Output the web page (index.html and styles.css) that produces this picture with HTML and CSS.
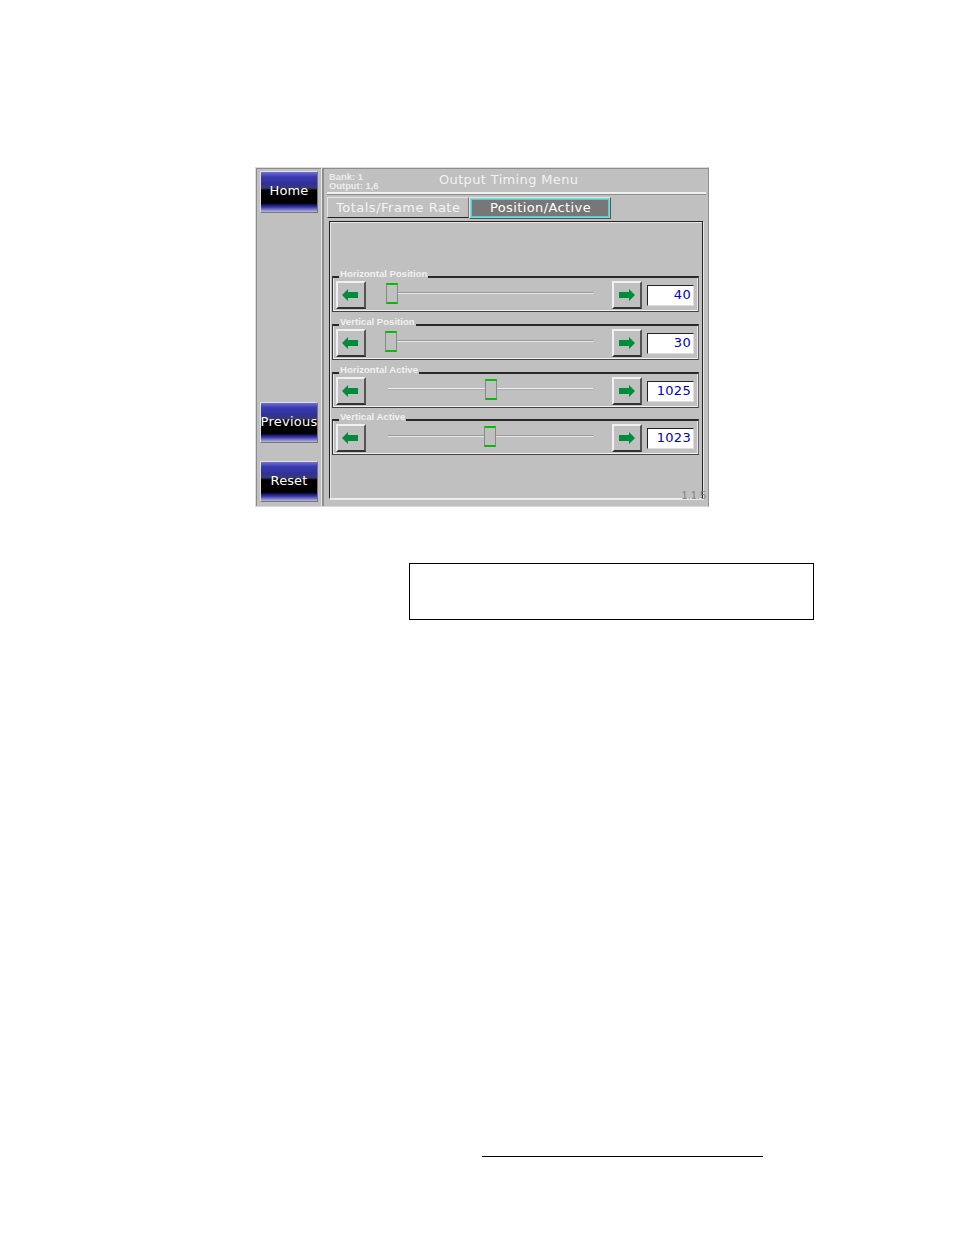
FILE: index.html
```html
<!DOCTYPE html>
<html lang="en">
<head>
  <meta charset="UTF-8">
  <title>Output Timing Menu</title>
  <link rel="stylesheet" href="styles.css">
</head>
<body>

  <!-- menu screenshot -->
  <div class="panel">
    <div class="side">
      <a class="nav-btn home">Home</a>
      <a class="nav-btn previous">Previous</a>
      <a class="nav-btn">Reset</a>
    </div>

    <div class="main">
      <div class="header">
        <div class="status">Bank: 1<br>Output: 1,6</div>
        <div class="title">Output Timing Menu</div>
      </div>

      <div class="tabs">
        <div class="tab">Totals/Frame Rate</div>
        <div class="tab active"><span>Position/Active</span></div>
      </div>

      <div class="content">
        <fieldset class="group">
          <legend>Horizontal Position</legend>
          <button class="arrow left"><svg viewBox="0 0 16 12"><path d="M0 6 6 0V3H16V9H6V12Z"/></svg></button>
          <div class="slider"><div class="thumb" style="margin-left: -2px"></div></div>
          <button class="arrow"><svg viewBox="0 0 16 12"><path d="M16 6 10 0V3H0V9H10V12Z"/></svg></button>
          <div class="value">40</div>
        </fieldset>

        <fieldset class="group">
          <legend>Vertical Position</legend>
          <button class="arrow left"><svg viewBox="0 0 16 12"><path d="M0 6 6 0V3H16V9H6V12Z"/></svg></button>
          <div class="slider"><div class="thumb" style="margin-left: -3px"></div></div>
          <button class="arrow"><svg viewBox="0 0 16 12"><path d="M16 6 10 0V3H0V9H10V12Z"/></svg></button>
          <div class="value">30</div>
        </fieldset>

        <fieldset class="group tight">
          <legend>Horizontal Active</legend>
          <button class="arrow left"><svg viewBox="0 0 16 12"><path d="M0 6 6 0V3H16V9H6V12Z"/></svg></button>
          <div class="slider light"><div class="thumb" style="margin-left: 97px"></div></div>
          <button class="arrow"><svg viewBox="0 0 16 12"><path d="M16 6 10 0V3H0V9H10V12Z"/></svg></button>
          <div class="value">1025</div>
        </fieldset>

        <fieldset class="group">
          <legend>Vertical Active</legend>
          <button class="arrow left"><svg viewBox="0 0 16 12"><path d="M0 6 6 0V3H16V9H6V12Z"/></svg></button>
          <div class="slider"><div class="thumb" style="margin-left: 96px"></div></div>
          <button class="arrow"><svg viewBox="0 0 16 12"><path d="M16 6 10 0V3H0V9H10V12Z"/></svg></button>
          <div class="value">1023</div>
        </fieldset>
      </div>
      <div class="version">1.1.5</div>
    </div>
  </div>

  <!-- empty note box -->
  <div class="note"></div>

  <!-- footnote rule -->
  <div class="rule"></div>

</body>
</html>
```

FILE: styles.css
```css
body {
  margin: 0;
  background-color: #fff;
  font-family: "DejaVu Sans", sans-serif;
  height: 1235px;
  overflow: hidden;
}

.panel {
  display: flex;
  position: relative;
  box-sizing: border-box;
  width: 454px;
  height: 340px;
  margin: 167px 0 0 255px;
  background-color: #c0c0c0;
  border: 1px solid;
  border-color: #dcdcdc #909090 #d8d8d8 #dcdcdc;
  box-shadow: inset 1px 1px 0 #8c8c8c;
}

/* left column */
.side {
  display: flex;
  flex-direction: column;
  box-sizing: border-box;
  width: 68px;
  height: 100%;
  padding: 3px 0 0 4px;
  border-right: 2px solid #8c8c8c;
  box-shadow: inset -1px 0 0 #e8e8e8;
}

.nav-btn {
  display: flex;
  align-items: center;
  justify-content: center;
  flex: none;
  box-sizing: border-box;
  width: 58px;
  height: 41px;
  padding-bottom: 2px;
  color: #fff;
  font-size: 13px;
  letter-spacing: 0.1px;
  white-space: nowrap;
  border: 1px solid #e0e0e0;
  border-right-color: #777;
  border-bottom-color: #777;
  background: linear-gradient(#7070d8 0, #3a3ab0 12%, #30309a 30%, #3a3a70 40%, #000 46%, #000 78%, #14146a 82%, #3a3aa8 88%, #7a7ac8 94%, #b8b8d8 100%);
}

.nav-btn.home {
  height: 42px;
  padding-bottom: 4px;
}

.nav-btn.previous {
  margin-top: auto;
  margin-bottom: 18px;
  letter-spacing: 0.25px;
}

.nav-btn:last-child {
  margin-bottom: 4px;
}

/* right column */
.main {
  flex: 1;
  padding: 0 2px 0 3px;
}

.header {
  display: flex;
  box-sizing: border-box;
  height: 26px;
  border-bottom: 2px solid #f0f0f0;
  box-shadow: 0 1px 0 #8c8c8c;
  color: #f2f2f2;
}

.status {
  width: 110px;
  padding: 4px 0 0 2px;
  font-family: "Liberation Sans", sans-serif;
  font-size: 9.4px;
  font-weight: bold;
  line-height: 9px;
  color: #ececec;
}

.title {
  padding-top: 4px;
  font-size: 13px;
  letter-spacing: 0.35px;
}

.tabs {
  display: flex;
  align-items: flex-start;
  margin-top: 3px;
  height: 22px;
}

.tab {
  box-sizing: border-box;
  width: 142px;
  height: 21px;
  padding: 2px 0 0 8px;
  color: #f4f4f4;
  font-size: 13px;
  letter-spacing: 0.5px;
  border: 1px solid #e4e4e4;
  border-right-color: #777;
  border-bottom-color: #222;
}

.tab.active {
  height: 22px;
  padding: 1px;
  letter-spacing: 0.4px;
  border-color: #e4e4e4 #555 #555 #e4e4e4;
}

.tab.active span {
  display: block;
  box-sizing: border-box;
  height: 18px;
  padding-left: 1px;
  text-align: center;
  color: #fff;
  background-color: #777;
  border: 1px solid #19e6e6;
  line-height: 15px;
}

.content {
  box-sizing: border-box;
  width: 374px;
  height: 278px;
  margin: 2px 0 0 2px;
  padding: 52px 3px 0 2px;
  border: 1px solid;
  border-color: #222 #222 #f0f0f0 #222;
  box-shadow: 1px 1px 0 #e8e8e8, inset 1px 1px 0 #e8e8e8;
}

/* slider rows */
.group {
  display: flex;
  align-items: flex-start;
  box-sizing: border-box;
  height: 38px;
  min-width: 0;
  margin: 0 0 10px 0;
  padding: 0 4px 0 3px;
  border: 1px solid;
  border-top-width: 2px;
  border-color: #2a2a2a #666 #444 #333;
  box-shadow: inset 1px 0 0 #e8e8e8, inset -1px 0 0 #e8e8e8, inset 0 -1px 0 #f0f0f0;
}

.group.tight {
  margin-bottom: 9px;
}

/* label sits a little above the frame line */
.group legend {
  position: relative;
  top: -3px;
  margin: 0 0 2px 3px;
  padding: 0 1px;
  color: #f0f0f0;
  font-family: "Liberation Sans", sans-serif;
  font-size: 9.6px;
  font-weight: bold;
  line-height: 5px;
}

.arrow {
  flex: none;
  box-sizing: border-box;
  width: 30px;
  height: 28px;
  padding: 0;
  background-color: #c0c0c0;
  border: 2px solid;
  border-color: #f0f0f0 #555 #333 #f0f0f0;
}

.arrow svg {
  display: block;
  width: 16px;
  height: 12px;
  margin: 0 auto;
  fill: #008c3a;
}

.arrow.left svg {
  margin-left: 4px;
}

.slider {
  display: flex;
  align-items: center;
  flex: 1;
  height: 21px;
  margin: 2px 19px 0 22px;
  background:
    linear-gradient(#999, #999) 0 9px / 100% 1px no-repeat,
    linear-gradient(#e8e8e8, #e8e8e8) 0 10px / 100% 1px no-repeat;
}

.slider.light {
  background:
    linear-gradient(#f0f0f0, #f0f0f0) 0 9px / 100% 1px no-repeat,
    linear-gradient(#aaa, #aaa) 0 10px / 100% 1px no-repeat;
}

.thumb {
  flex: none;
  box-sizing: border-box;
  width: 12px;
  height: 21px;
  background-color: #c0c0c0;
  border: 1px solid #888;
  border-top: 2px solid #00c000;
  border-bottom: 2px solid #00c000;
}

.value {
  flex: none;
  box-sizing: border-box;
  width: 47px;
  height: 21px;
  margin: 4px 0 0 5px;
  padding-right: 2px;
  background-color: #fff;
  color: #0000c8;
  font-size: 13px;
  letter-spacing: 0.3px;
  line-height: 18px;
  text-align: right;
  border: 1px solid;
  border-color: #222 #ddd #ddd #222;
}

.version {
  position: absolute;
  right: 2px;
  bottom: 5px;
  color: #808080;
  font-family: "Liberation Sans", sans-serif;
  font-size: 11px;
}

/* below the panel */
.note {
  box-sizing: border-box;
  width: 405px;
  height: 57px;
  margin: 56px 0 0 409px;
  border: 1px solid #000;
}

.rule {
  width: 281px;
  height: 1px;
  margin: 536px 0 0 482px;
  background-color: #000;
}
```
